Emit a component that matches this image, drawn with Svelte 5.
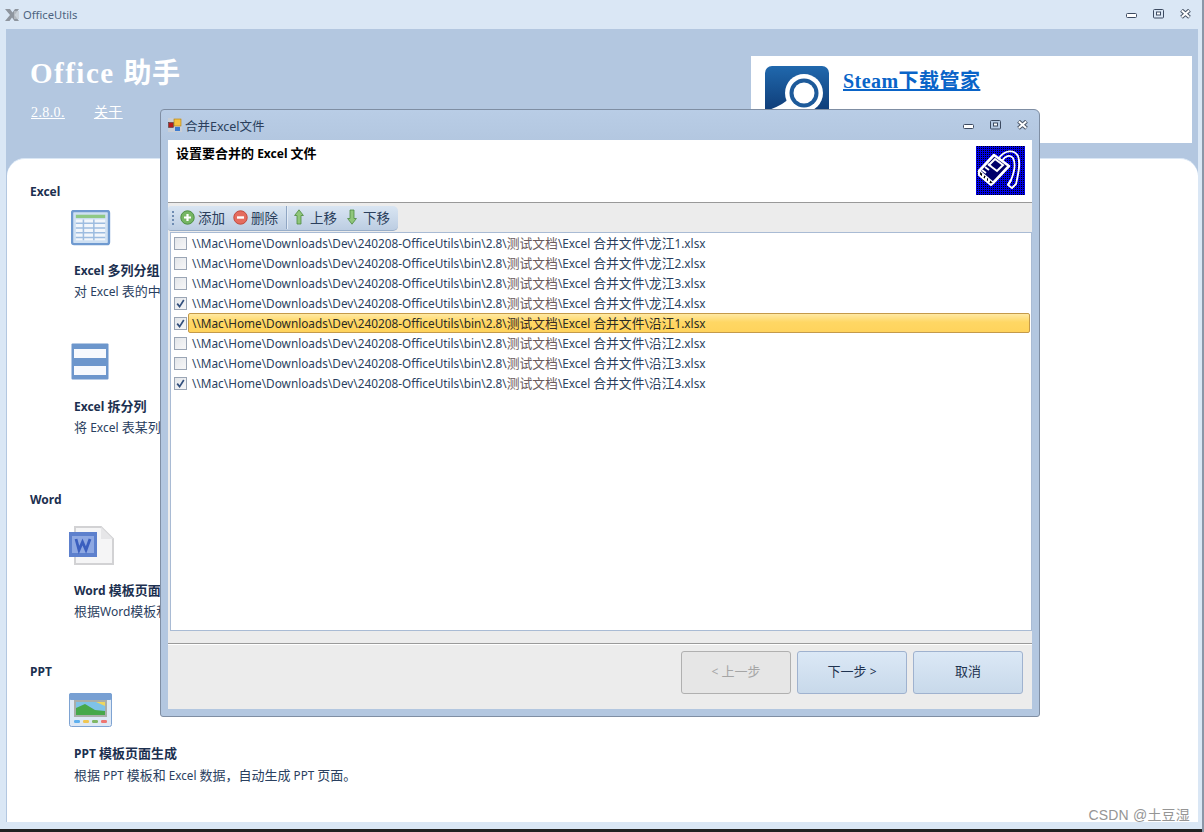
<script>
  const base = '\\\\Mac\\Home\\Downloads\\Dev\\240208-OfficeUtils\\bin\\2.8\\';
  const files = [
    ['龙江1', false], ['龙江2', false], ['龙江3', false], ['龙江4', true],
    ['沿江1', true], ['沿江2', false], ['沿江3', false], ['沿江4', true]
  ].map(([name, checked], i) => ({ name, checked, selected: i === 4 }));
  const segs = (s) => s.split(/([\u3000-\u9fff\uff00-\uffef]+)/).filter(Boolean);
  const isCjk = (p) => /[\u3000-\u9fff\uff00-\uffef]/.test(p);
</script>

{#snippet t(s)}{#each segs(s) as p}{#if isCjk(p)}<span class="c" class:warm={p === '测试文档'}>{p}</span>{:else}{p}{/if}{/each}{/snippet}

{#snippet winButtons()}
  <div class="winbtns">
    <svg width="11" height="6" viewBox="0 0 11 6" class="wmin"><rect x="0.5" y="0.5" width="10" height="4" rx="1" fill="#fff" stroke="#3c4a60"/></svg>
    <svg width="11" height="10" viewBox="0 0 11 10"><rect x="0.5" y="0.5" width="10" height="8.5" rx="1" fill="none" stroke="#3c4a60"/><rect x="3.5" y="3" width="4" height="3" fill="#fff" stroke="#3c4a60"/></svg>
    <svg width="11" height="10" viewBox="0 0 11 10"><path d="M1.5 1.2 L9.5 8.3 M9.5 1.2 L1.5 8.3" stroke="#4a5668" stroke-width="4"/><path d="M1.8 1.5 L9.2 8 M9.2 1.5 L1.8 8" stroke="#fff" stroke-width="2"/></svg>
  </div>
{/snippet}

<div class="win">
  <div class="titlebar">
    <svg class="appicon" width="15" height="14" viewBox="0 0 15 14"><path d="M0 1h5l2.5 3.5L10 1h4L9.5 7l4.5 6H9.5L7 9.5 4.5 13H0l5-6z" fill="#8e959e"/><rect x="9" y="3" width="5" height="8" fill="#c2c7cd" opacity=".7"/></svg>
    <span class="apptitle">OfficeUtils</span>
    {@render winButtons()}
  </div>

  <div class="client">
    <header class="hero">
      <div class="brand">
        <h1>Office <span class="h1c">助手</span></h1>
        <div class="links"><a href="#v">2.8.0.</a><a href="#a">关于</a></div>
      </div>
      <div class="ad">
        <svg class="steam" width="64" height="64" viewBox="0 0 64 64">
          <defs><linearGradient id="sg" x1="0" y1="0" x2="0" y2="1"><stop offset="0" stop-color="#2068ad"/><stop offset=".7" stop-color="#0f3d78"/></linearGradient></defs>
          <rect width="64" height="64" rx="7" fill="url(#sg)"/>
          <path d="M24 32 Q20 38 4 44 L0 50 L30 60 L42 46 Z" fill="#fff"/>
          <circle cx="39" cy="27" r="19" fill="#fff"/>
          <circle cx="39" cy="27" r="14.5" fill="#1d5a9a"/>
          <circle cx="39" cy="27" r="10.5" fill="#fff"/>
        </svg>
        <a class="adlink" href="#s">Steam下载管家</a>
      </div>
    </header>

    <main class="panel">
      <h2 class="sec">Excel</h2>
      <section class="tool t1">
        <svg class="ic" width="40" height="36" viewBox="0 0 42 38">
          <rect x="1" y="1" width="39" height="35" rx="2" fill="#cfe0f2" stroke="#6f9ad0" stroke-width="2.5"/>
          <rect x="5" y="5" width="31" height="3.5" fill="#8fc985"/>
          <rect x="5" y="10" width="31" height="22" fill="#f2f6fb"/>
          <path d="M5 14h31M5 19h31M5 24h31M5 29h31M13 10v22M24 10v22" stroke="#9dbce0" stroke-width="1.6"/>
        </svg>
        <h3>{@render t('Excel 多列分组')}</h3>
        <p>{@render t('对 Excel 表的中')}</p>
      </section>
      <section class="tool t2">
        <svg class="ic" width="38" height="37" viewBox="0 0 38 37">
          <rect x="0.5" y="0.5" width="37" height="36" rx="1" fill="#6c96cc"/>
          <rect x="3" y="6" width="32" height="9" fill="#f6f9fd"/>
          <rect x="3" y="23" width="32" height="9" fill="#f6f9fd"/>
        </svg>
        <h3>{@render t('Excel 拆分列')}</h3>
        <p>{@render t('将 Excel 表某列')}</p>
      </section>

      <h2 class="sec word">Word</h2>
      <section class="tool t3">
        <svg class="ic" width="46" height="40" viewBox="0 0 46 40">
          <path d="M6 1h26l12 12v25H6z" fill="#f5f5f6" stroke="#d2d2d4" stroke-width="2"/>
          <path d="M32 1v12h12z" fill="#e6e6e8"/>
          <rect x="0" y="6" width="28" height="25" fill="#5d80cd"/>
          <rect x="3" y="10" width="22" height="17" fill="#8ea8e2"/>
          <path d="M7 13l3 11 3.5-8 3.5 8 4-11" fill="none" stroke="#3b5fbf" stroke-width="2.8"/>
        </svg>
        <h3>{@render t('Word 模板页面')}</h3>
        <p>{@render t('根据Word模板和')}</p>
      </section>

      <h2 class="sec ppt">PPT</h2>
      <section class="tool t4">
        <svg class="ic" width="43" height="34" viewBox="0 0 43 34">
          <rect x="0.5" y="0.5" width="42" height="33" rx="2" fill="#dde8f5" stroke="#7ea3d2"/>
          <rect x="0" y="0" width="43" height="7" rx="2" fill="#78a0d3"/>
          <rect x="5" y="7" width="33" height="17" fill="#a9aeaa"/>
          <rect x="7" y="9" width="29" height="13" fill="#7fc2e8"/>
          <path d="M7 15l9-4 10 6 10 1v4H7z" fill="#47a84a"/>
          <path d="M27 9h9v4z" fill="#efd65e"/>
          <rect x="5" y="27" width="6" height="3" rx="1.2" fill="#5fb0ee"/>
          <rect x="14" y="27" width="6" height="3" rx="1.2" fill="#f0c653"/>
          <rect x="23" y="27" width="6" height="3" rx="1.2" fill="#7fb765"/>
          <rect x="32" y="27" width="6" height="3" rx="1.2" fill="#ee7671"/>
        </svg>
        <h3>{@render t('PPT 模板页面生成')}</h3>
        <p class="pp">{@render t('根据 PPT 模板和 Excel 数据，自动生成 PPT 页面。')}</p>
      </section>
    </main>
  </div>

  <div class="footer-strip"></div>
  <div class="mark">CSDN @土豆湿</div>

  <div class="dialog">
    <div class="dtitle">
      <svg class="dicon" width="14" height="14" viewBox="0 0 14 14">
        <rect width="14" height="14" fill="#c9ced6"/>
        <rect x="0.5" y="4.5" width="5" height="5" fill="#b71c1c" stroke="#333" stroke-width=".5"/>
        <rect x="6" y="1" width="7" height="7" fill="#f5c242" stroke="#a07a1a" stroke-width=".6"/>
        <rect x="7" y="9" width="5" height="4" fill="#3d7bd0"/>
      </svg>
      <span>合并Excel文件</span>
      {@render winButtons()}
    </div>
    <div class="dbody">
      <div class="dhead">
        <strong>{@render t('设置要合并的 Excel 文件')}</strong>
        <svg class="whistle" width="49" height="49" viewBox="0 0 49 49">
          <path d="M23 12 C29 4 38 3 42 10 C45 18 42 29 40 38 L36 42 L32 39 L35 34 C38 27 40 18 37 12 C34 8 29 10 26 15" fill="none" stroke="#fff" stroke-width="1.8" stroke-linejoin="round"/>
          <path d="M32 39 L35 34" stroke="#fff" stroke-width="2.4"/>
          <path d="M3 25 L18 9 L33 20 L17 37 Z" fill="#00006a" stroke="#fff" stroke-width="2.6" stroke-linejoin="round"/>
          <path d="M3 25 L3 29 L15 39 L17 37" fill="#000" stroke="#fff" stroke-width="2.2" stroke-linejoin="round"/>
          <path d="M13 19 L19 13 L27 19 L21 25 Z" fill="none" stroke="#fff" stroke-width="2"/>
          <path d="M7 28v3M10 31v3M13 33v3" stroke="#fff" stroke-width="2"/>
          <path d="M6 24l4 3M9 21l4 3M12 18l3 2" stroke="#fff" stroke-width="1.8"/>
        </svg>
      </div>
      <div class="toolrow">
        <div class="strip">
          <span class="grip"></span>
          <button class="tb"><svg width="15" height="15" viewBox="0 0 15 15"><circle cx="7.5" cy="7.5" r="6.7" fill="#76b664" stroke="#4d8f42"/><path d="M7.5 4v7M4 7.5h7" stroke="#fff" stroke-width="2.2"/></svg>添加</button>
          <button class="tb"><svg width="15" height="15" viewBox="0 0 15 15"><circle cx="7.5" cy="7.5" r="6.7" fill="#e56c5f" stroke="#c04a3e"/><path d="M4 7.5h7" stroke="#fff" stroke-width="2.4"/></svg>删除</button>
          <span class="sep"></span>
          <button class="tb arrow"><svg width="10" height="16" viewBox="0 0 10 16"><path d="M5 .8L9.4 6.5H7V15H3V6.5H.6z" fill="#8fc67a" stroke="#4c8a3f" stroke-width=".8"/></svg>上移</button>
          <button class="tb arrow"><svg width="10" height="16" viewBox="0 0 10 16"><path d="M5 15.2L9.4 9.5H7V1H3V9.5H.6z" fill="#8fc67a" stroke="#4c8a3f" stroke-width=".8"/></svg>下移</button>
        </div>
      </div>
      <div class="list">
        {#each files as f}
          <div class="row">
            <span class="cb">
              {#if f.checked}
                <svg width="9" height="9" viewBox="0 0 9 9"><path d="M1.2 4.6 L3.6 7.6 L7.8 1" fill="none" stroke="#33507e" stroke-width="1.7"/></svg>
              {/if}
            </span>
            <span class="path" class:sel={f.selected}>{@render t(base + '测试文档\\Excel 合并文件\\' + f.name + '.xlsx')}</span>
          </div>
        {/each}
      </div>
      <div class="gap"></div>
      <div class="actions">
        <button class="btn off">{@render t('< 上一步')}</button>
        <button class="btn">{@render t('下一步 >')}</button>
        <button class="btn">{@render t('取消')}</button>
      </div>
    </div>
  </div>
</div>

<style>
  :global(body) { margin: 0; background: #1f1f1f; }
  .win {
    position: relative; width: 1204px; height: 832px; overflow: hidden; box-sizing: border-box;
    display: flex; flex-direction: column;
    background: #dae7f5;
    font-family: "Noto Sans", "Noto Sans CJK SC", sans-serif;
    color: #1d3557;
    border-right: 2px solid #8a97a8;
  }
  .titlebar { height: 29px; flex: none; display: flex; align-items: center; padding-left: 5px; position: relative; }
  .appicon { margin-right: 3px; filter: blur(.4px); }
  .apptitle { font-size: 11.2px; color: #4d6480; }
  .winbtns { position: absolute; right: 11px; top: 9px; display: flex; gap: 16px; align-items: flex-start; }
  .wmin { margin-top: 4px; }
  .client {
    flex: none; height: 793px; margin: 0 4px 0 6px; background: #b3c7e0;
    display: flex; flex-direction: column;
  }
  .hero { height: 129px; flex: none; position: relative; display: flex; }
  .brand { padding: 26px 0 0 24px; width: 745px; box-sizing: border-box; }
  h1 { margin: 0; font: bold 29px/36px "Liberation Serif", "Noto Sans CJK SC", serif; color: #fff; letter-spacing: 1.5px; }
  .h1c { font-size: 28px; letter-spacing: .6px; line-height: 1; }
  .links { display: flex; gap: 29px; margin-top: 13px; padding-left: 1px; }
  .links a { font: 14px/18px "Liberation Serif", "Noto Sans CJK SC", serif; color: #fff; letter-spacing: .4px; }
  .ad {
    margin-top: 27px; width: 441px; height: 87px; background: #fff; display: flex; align-items: flex-start;
    padding: 10px 0 0 14px; box-sizing: border-box; overflow: hidden;
  }
  .steam { flex: none; filter: blur(.5px); }
  .adlink { margin: 2px 0 0 14px; font: bold 20px/26px "Liberation Serif", "Noto Sans CJK SC", serif; color: #0a64c8; letter-spacing: .45px; }

  .panel {
    flex: 1; margin-left: 1px; background: #fff; border-radius: 18px 18px 0 0; padding: 25px 0 0 23px;
    border-top: 1px solid #dae7f5; box-sizing: border-box;
  }
  .sec { margin: 0; font-size: 12px; line-height: 16px; font-weight: 700; color: #1c3050; }
  .word { margin-top: 56px; }
  .ppt { margin-top: 44px; }
  .tool { padding-left: 44px; }
  .ic { display: block; filter: blur(.7px); }
  h3 { margin: 0; font-size: 12px; line-height: 16px; font-weight: 700; color: #1c3050; white-space: nowrap; }
  p { margin: 5px 0 0; font-size: 12px; line-height: 16px; color: #2a4060; white-space: nowrap; }
  p.pp { font-size: 11.7px; }
  .c { font-size: 13px; line-height: 1; }
  .t1 { margin-top: 10px; }
  .t1 .ic { margin-bottom: 17px; margin-left: -3px; }
  .t2 { margin-top: 43px; }
  .t2 .ic { margin-bottom: 19px; margin-left: -3px; }
  .t3 { margin-top: 18px; }
  .t3 .ic { margin-bottom: 17px; margin-left: -5px; }
  .t4 { margin-top: 13px; }
  .t4 .ic { margin-bottom: 19px; margin-left: -5px; }

  .footer-strip { position: absolute; left: 0; right: 0; bottom: 0; height: 3px; background: #222; }
  .mark { position: absolute; right: 12px; bottom: 8px; font: 14px/18px "Liberation Sans", "Noto Sans CJK SC", sans-serif; color: #959595; letter-spacing: .2px; }

  .dialog {
    position: absolute; left: 160px; top: 109px; width: 880px; height: 608px; box-sizing: border-box;
    background: #b3c7e0; border: 1px solid #7f8ea3; border-radius: 4px 6px 3px 3px;
    padding: 30px 7px 7px; display: flex;
    background-image: linear-gradient(#b9cde6, #b3c7e0 30px);
  }
  .dtitle { position: absolute; left: 0; right: 0; top: 0; height: 30px; display: flex; align-items: center; padding-left: 7px; font-size: 12.5px; color: #2b3f5c; }
  .dtitle .winbtns { right: 11px; top: 10px; }
  .dicon { margin-right: 3px; }
  .dbody { flex: 1; background: #ececec; display: flex; flex-direction: column; min-width: 0; }
  .dhead {
    height: 63px; flex: none; background: #fff; border-bottom: 1px solid #999; position: relative; box-sizing: border-box; padding: 1px 0 0 8px;
  }
  .dhead strong { font-size: 12px; line-height: 17px; color: #000; font-weight: 700; }
  .whistle { position: absolute; right: 7px; top: 6px; background: conic-gradient(#000 25%, #0000e6 0) 0 0 / 2px 2px; }
  .toolrow { height: 29px; flex: none; padding-top: 3px; box-sizing: border-box; }
  .strip {
    width: 230px; height: 25px; box-sizing: border-box; display: flex; align-items: center; position: relative;
    background: linear-gradient(#d9e5f2, #bccde2); border-radius: 3px 5px 5px 3px;
    border-bottom: 1px solid #98aec9; padding: 0 0 2px 12px;
  }
  .grip { position: absolute; left: 4px; top: 5px; width: 2px; height: 15px; background: repeating-linear-gradient(#6f8cb2 0 2px, transparent 2px 4px); }
  .tb { all: unset; display: flex; align-items: center; gap: 3px; font-size: 13.5px; color: #2b3f5c; margin-right: 8px; white-space: nowrap; flex: none; }
  .tb.arrow { gap: 6px; margin-right: 10px; }
  .sep { width: 1px; height: 23px; background: #8fa6c3; margin-right: 7px; box-shadow: 1px 0 0 #e3ecf6; flex: none; }
  .list {
    height: 399px; flex: none; margin-left: 2px; background: #fff; border: 1px solid #a9bbd4; box-sizing: border-box;
  }
  .row { height: 20px; display: flex; align-items: center; padding-left: 3px; }
  .cb {
    width: 11px; height: 11px; flex: none; border: 1px solid #9aa5b5; display: flex; align-items: center; justify-content: center;
    background: linear-gradient(135deg, #e3e6ea, #f7f7f8);
  }
  .path {
    flex: 1; margin-left: 1px; margin-right: 1px; height: 18px; line-height: 18px; padding-left: 3px; border: 1px solid transparent; border-radius: 2px;
    font-size: 11.8px; color: #2a3f5f; white-space: pre;
  }
  .path .c { font-size: 12.8px; }
  .path .warm { color: #6a5a5c; }
  .path.sel { background: linear-gradient(#ffe9a3, #ffd764 45%, #ffd35c); border-color: #c49a4a; color: #2a2a20; }
  .path.sel .warm { color: #3a2a20; }
  .gap { height: 12px; flex: none; border-bottom: 1px solid #9a9a9a; box-shadow: 0 1px 0 #fff; }
  .actions { flex: 1; display: flex; justify-content: flex-end; gap: 6px; padding: 7px 9px 0 0; align-items: flex-start; }
  .btn {
    width: 110px; height: 43px; box-sizing: border-box; border: 1px solid #9fb2cf; border-radius: 3px;
    background: linear-gradient(#dbe8f6, #c8d9ea); color: #1f3350; font: 12px/16px "Noto Sans", "Noto Sans CJK SC", sans-serif; padding: 0 0 2px;
  }
  .btn.off { background: #e6e6e6; border-color: #b0b0b0; color: #a5a5a5; }
</style>
